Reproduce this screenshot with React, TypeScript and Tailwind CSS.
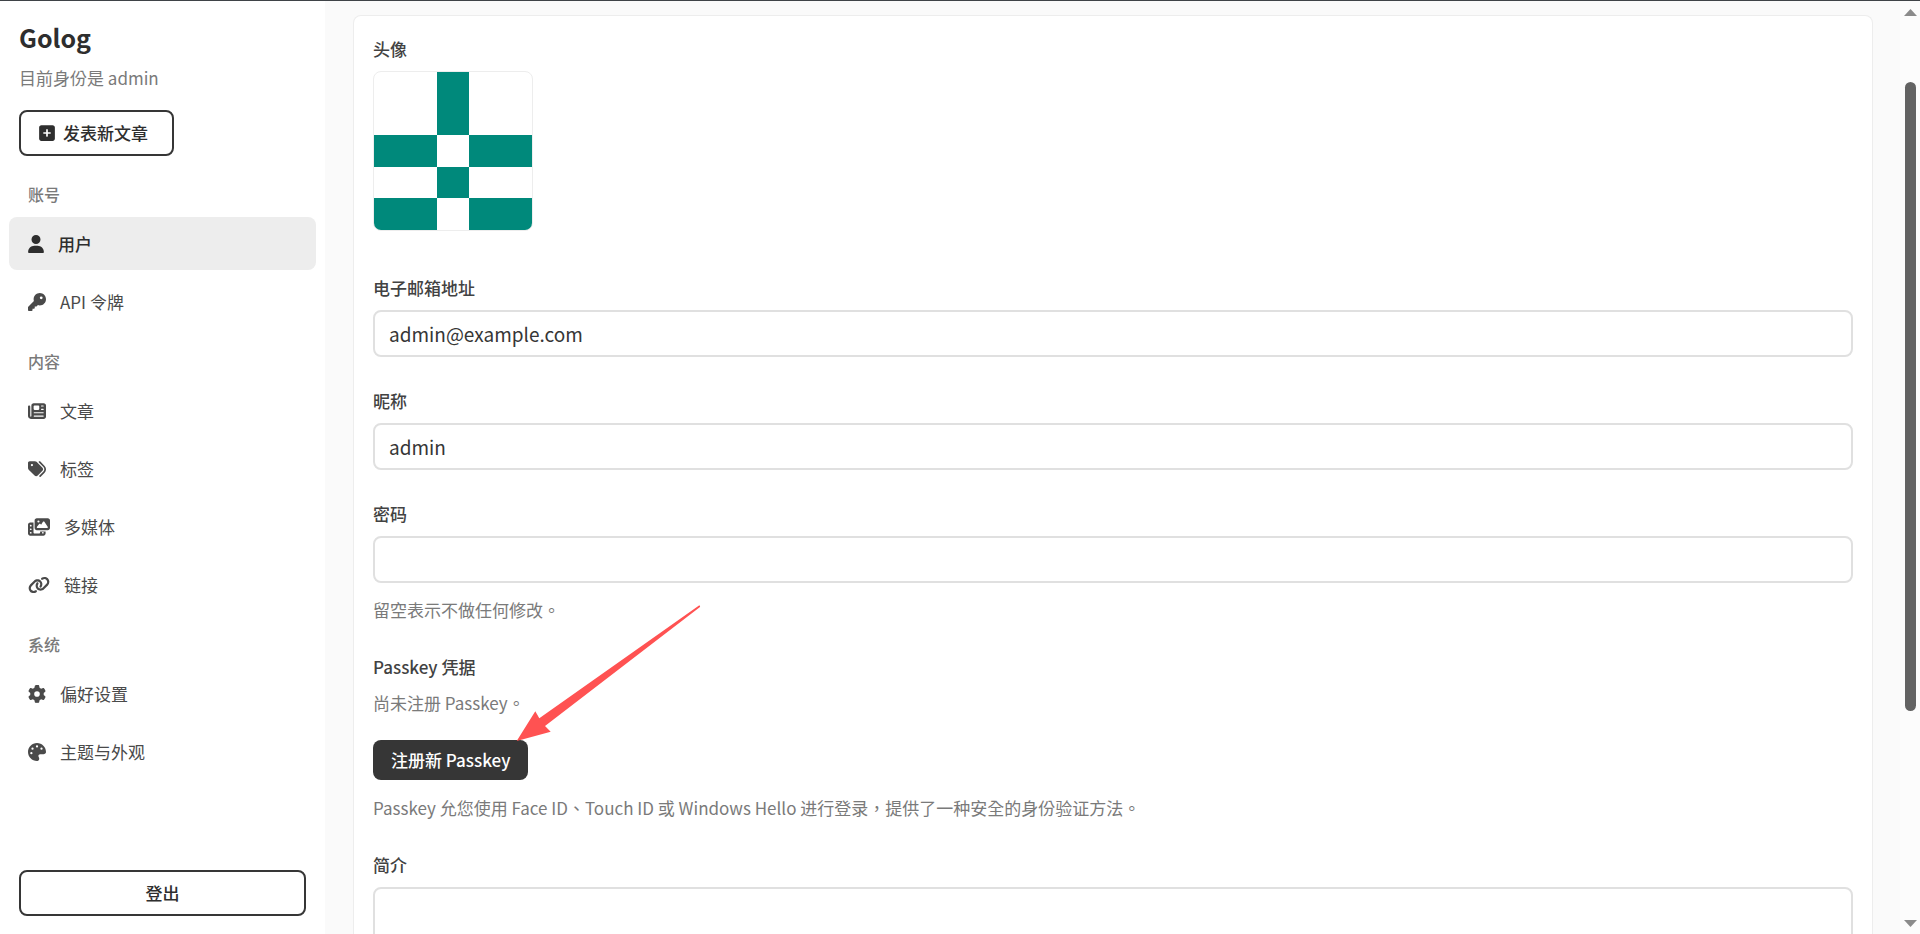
import type { ReactNode } from "react";
import type { IconType } from "react-icons";
import {
  FaGear,
  FaKey,
  FaLink,
  FaNewspaper,
  FaPalette,
  FaPhotoFilm,
  FaSquarePlus,
  FaTags,
  FaUser,
} from "react-icons/fa6";

type NavItem = { label: string; icon: IconType; iconWidth: string; active?: boolean };
type NavSection = { title: string; items: NavItem[] };

const sections: NavSection[] = [
  {
    title: "账号",
    items: [
      { label: "用户", icon: FaUser, iconWidth: "w-4", active: true },
      { label: "API 令牌", icon: FaKey, iconWidth: "w-[18px]" },
    ],
  },
  {
    title: "内容",
    items: [
      { label: "文章", icon: FaNewspaper, iconWidth: "w-[18px]" },
      { label: "标签", icon: FaTags, iconWidth: "w-[18px]" },
      { label: "多媒体", icon: FaPhotoFilm, iconWidth: "w-[22px]" },
      { label: "链接", icon: FaLink, iconWidth: "w-[22px]" },
    ],
  },
  {
    title: "系统",
    items: [
      { label: "偏好设置", icon: FaGear, iconWidth: "w-[18px]" },
      { label: "主题与外观", icon: FaPalette, iconWidth: "w-[18px]" },
    ],
  },
];

const inputClass =
  "w-full rounded-lg border-2 border-[#e0e0e0] bg-white px-[14px] text-[19px] text-[#363636] outline-none focus:border-[#363636]";

function Sidebar() {
  return (
    <aside className="flex w-[325px] shrink-0 flex-col bg-white">
      <header className="flex flex-col items-start px-[19px] pt-4">
        <h1 className="text-[25px] leading-10 font-bold text-[#2e2e2e]">Golog</h1>
        <p className="mt-2 leading-[26px] text-[#7a7a7a]">目前身份是 admin</p>
        <button
          type="button"
          className="mt-[19px] flex h-[46px] items-center gap-2 rounded-lg border-2 border-[#363636] pr-6 pl-[18px] font-medium text-[#2e2e2e]"
        >
          <FaSquarePlus className="h-[18px] w-4" />
          发表新文章
        </button>
      </header>
      <nav className="mt-5 flex flex-col gap-[15px] px-[9px]">
        {sections.map((section) => (
          <section key={section.title} className="flex flex-col gap-[5px]">
            <h2 className="px-[19px] text-base leading-9 font-medium text-[#7a7a7a]">
              {section.title}
            </h2>
            <ul className="flex flex-col gap-[5px]">
              {section.items.map(({ label, icon: Icon, iconWidth, active }) => (
                <li key={label}>
                  <a
                    href="#"
                    className={
                      active
                        ? "flex h-[53px] items-center gap-[14px] rounded-lg bg-[#ededed] px-[19px] font-medium text-[#2e2e2e]"
                        : "flex h-[53px] items-center gap-[14px] rounded-lg px-[19px] text-[#4a4a4a]"
                    }
                  >
                    <Icon className={"h-[18px] shrink-0 " + iconWidth} />
                    {label}
                  </a>
                </li>
              ))}
            </ul>
          </section>
        ))}
      </nav>
      <div className="mt-auto px-[19px] pb-[18px]">
        <button
          type="button"
          className="h-[46px] w-full rounded-lg border-2 border-[#363636] font-medium text-[#2e2e2e]"
        >
          登出
        </button>
      </div>
    </aside>
  );
}

function Identicon() {
  return (
    <svg
      viewBox="0 0 5 5"
      role="img"
      aria-label="头像"
      shapeRendering="crispEdges"
      className="size-40 rounded-lg border border-[#ededed]"
    >
      <path
        fill="#00897b"
        d="M2 0h1v2H2zM0 2h2v1H0zM3 2h2v1H3zM2 3h1v1H2zM0 4h2v1H0zM3 4h2v1H3z"
      />
    </svg>
  );
}

function Field({ id, label, children }: { id: string; label: string; children: ReactNode }) {
  return (
    <div className="flex flex-col">
      <label htmlFor={id} className="mb-[9px] leading-[26px] font-medium text-[#424242]">
        {label}
      </label>
      {children}
    </div>
  );
}

function Arrow() {
  return (
    <svg
      viewBox="0 0 185 137"
      aria-hidden="true"
      className="pointer-events-none absolute -top-[135px] left-[143px] h-[137px] w-[185px]"
    >
      <path
        fill="#ff5252"
        d="M0.7 136L19.3 106.3L23.3 113.3L183 0.6Q184.6 0.4 184 2L29 121L34.7 126.7Z"
      />
    </svg>
  );
}

function ProfileForm() {
  return (
    <form className="flex flex-col gap-[31px] rounded-t-lg border border-b-0 border-[#ededed] bg-white px-[19px] pt-5">
      <div className="mb-[13px] flex flex-col">
        <h2 className="mb-[9px] leading-[26px] font-medium text-[#424242]">头像</h2>
        <Identicon />
      </div>
      <Field id="email" label="电子邮箱地址">
        <input id="email" type="email" defaultValue="admin@example.com" className={inputClass + " h-[47px]"} />
      </Field>
      <Field id="nickname" label="昵称">
        <input id="nickname" type="text" defaultValue="admin" className={inputClass + " h-[47px]"} />
      </Field>
      <Field id="password" label="密码">
        <input id="password" type="password" className={inputClass + " h-[47px]"} />
        <p className="mt-[14px] leading-[26px] text-[#7a7a7a]">留空表示不做任何修改。</p>
      </Field>
      <section className="flex flex-col items-start">
        <h2 className="mb-[10px] leading-[26px] font-medium text-[#424242]">Passkey 凭据</h2>
        <p className="leading-[26px] text-[#7a7a7a]">尚未注册 Passkey。</p>
        <div className="relative mt-6">
          <button
            type="button"
            className="block h-10 rounded-lg bg-[#363636] px-[18px] font-medium text-white"
          >
            注册新 Passkey
          </button>
          <Arrow />
        </div>
        <p className="mt-[15px] leading-[26px] text-[#7a7a7a]">
          Passkey 允您使用 Face ID、Touch ID 或 Windows Hello 进行登录，提供了一种安全的身份验证方法。
        </p>
      </section>
      <Field id="bio" label="简介">
        <textarea id="bio" rows={5} className={inputClass + " resize-none py-2"} />
      </Field>
    </form>
  );
}

function Scrollbar() {
  return (
    <div aria-hidden="true" className="flex w-5 shrink-0 flex-col items-center bg-[#fcfcfc] pt-2 pb-[7px]">
      <svg viewBox="0 0 13 7" className="h-[7px] w-[13px] fill-[#8b8b8b]">
        <path d="M6.5 0L13 7H0z" />
      </svg>
      <div className="flex w-[11px] grow flex-col pt-[66px]">
        <div className="h-3/4 rounded-full bg-[#636363]" />
      </div>
      <svg viewBox="0 0 13 7" className="h-[7px] w-[13px] fill-[#8b8b8b]">
        <path d="M0 0H13L6.5 7z" />
      </svg>
    </div>
  );
}

export default function App() {
  return (
    <div className="flex h-screen overflow-hidden border-t border-[#3f4347] bg-[#fafafa] font-['Noto_Sans_CJK_TC',sans-serif] text-[17px]">
      <Sidebar />
      <main className="min-w-0 grow overflow-hidden pt-[14px] pr-[27px] pl-7">
        <ProfileForm />
      </main>
      <Scrollbar />
    </div>
  );
}
